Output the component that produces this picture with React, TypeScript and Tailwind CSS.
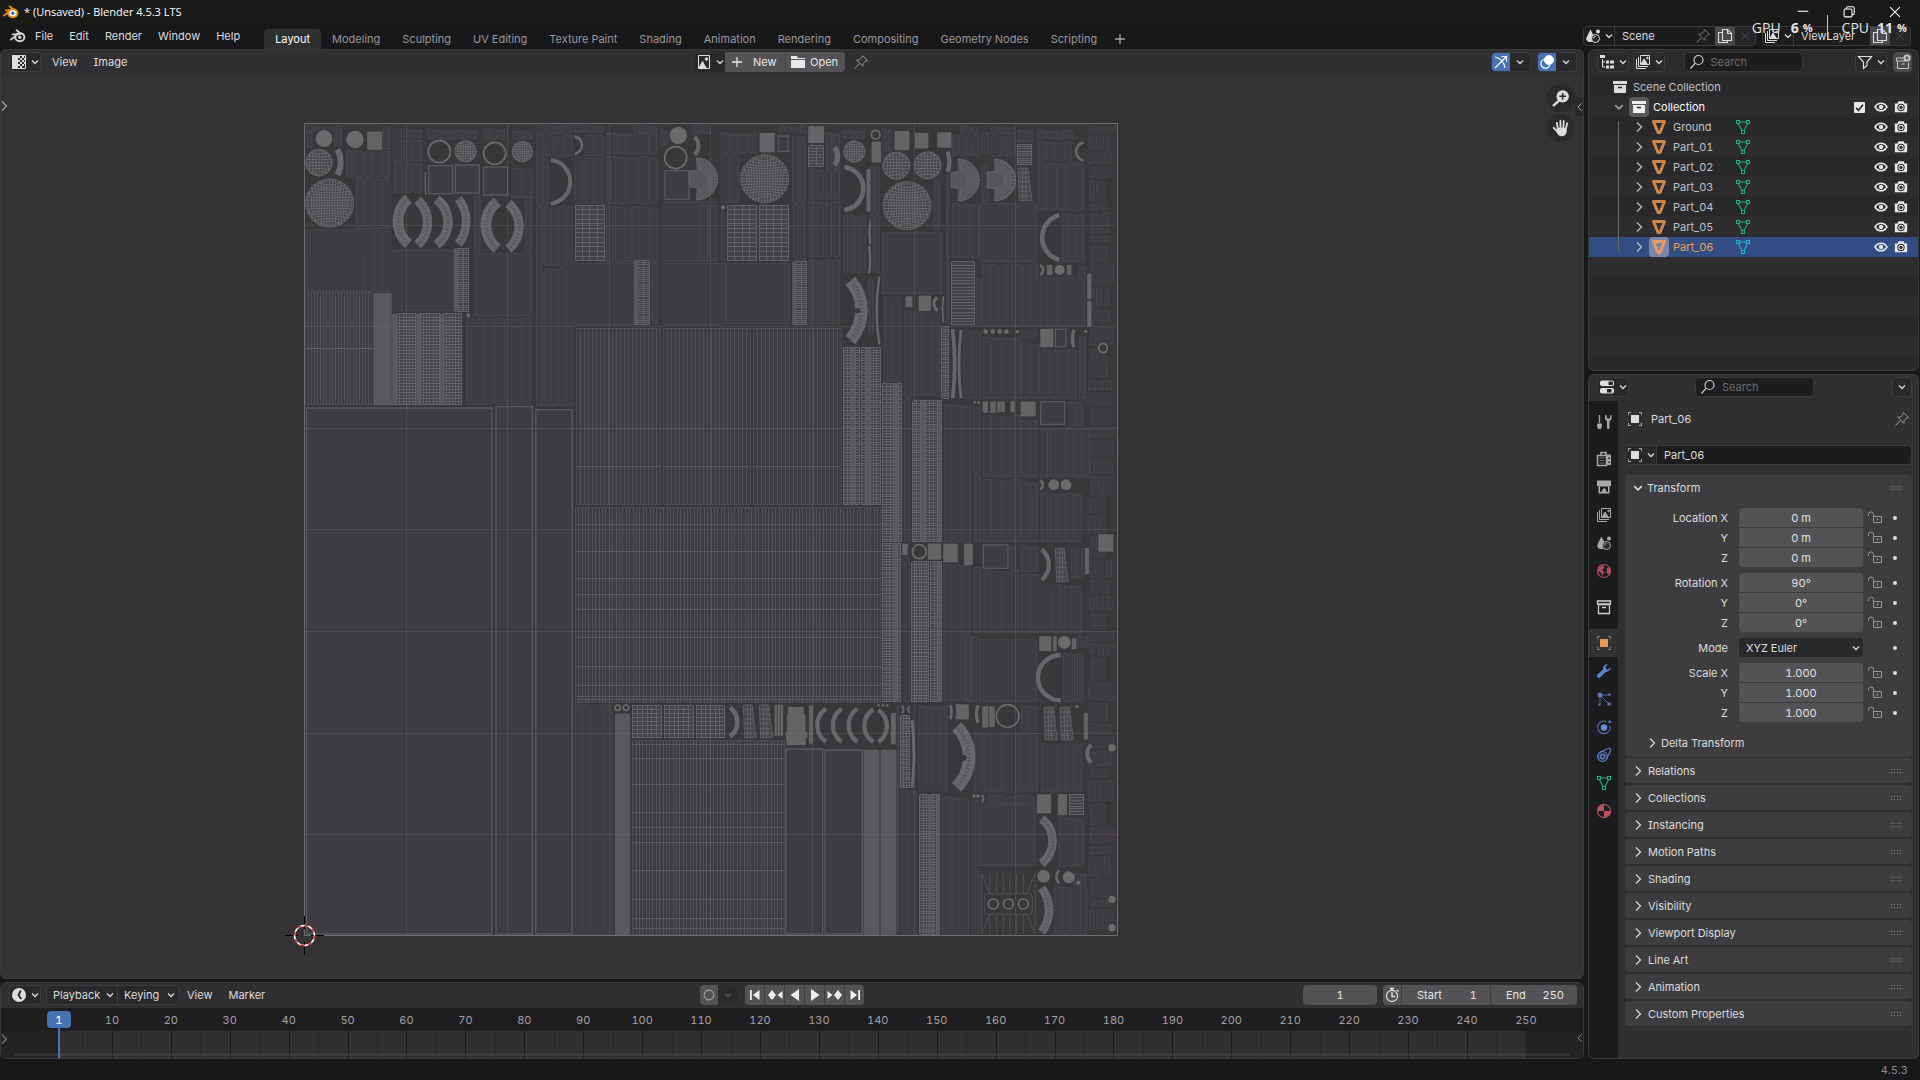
import React, { useState } from "react";
import clsx from "clsx";

type IconProps = { className?: string };

/* ---------- icons ---------- */

const Svg = ({ className = "size-4", children }: IconProps & { children: React.ReactNode }) => (
  <svg viewBox="0 0 16 16" fill="none" stroke="currentColor" strokeWidth="1" className={clsx("shrink-0", className)} aria-hidden="true">
    {children}
  </svg>
);

const ChevronDown = ({ className = "size-2" }: IconProps) => (
  <svg viewBox="0 0 8 8" fill="none" stroke="currentColor" strokeWidth="1.3" className={clsx("shrink-0", className)} aria-hidden="true">
    <path d="M1 2.5 4 5.5 7 2.5" />
  </svg>
);

const ChevronRight = ({ className = "size-3" }: IconProps) => (
  <svg viewBox="0 0 12 12" fill="none" stroke="currentColor" strokeWidth="1.2" className={clsx("shrink-0", className)} aria-hidden="true">
    <path d="M4 1.5 8.5 6 4 10.5" />
  </svg>
);

const BlenderLogo = ({ className, center = "none" }: IconProps & { center?: string }) => (
  <svg viewBox="0 0 16 16" fill="none" stroke="currentColor" className={clsx("shrink-0", className)} aria-hidden="true">
    <path d="M1 11.5 8.6 5.6M2.6 6.3h7M6.6 2.2 11 5.6" strokeWidth="1.8" strokeLinecap="round" />
    <ellipse cx="9.8" cy="9.2" rx="4.6" ry="4" strokeWidth="2" fill={center === "none" ? "none" : "#ffffff"} />
    <circle cx="9.8" cy="9.2" r="1.7" fill={center === "none" ? "currentColor" : center} stroke="none" />
  </svg>
);

const UvIcon = () => (
  <Svg>
    <path d="M1 1h5v14H1z" fill="currentColor" stroke="none" />
    <path d="M6.5 1.5h8v13h-8z" />
    <path d="M7 2h2v2H7zM11 2h2v2h-2zM9 4h2v2H9zM13 4h1v2h-1zM7 6h2v2H7zM11 6h2v2h-2zM9 8h2v2H9zM13 8h1v2h-1zM7 10h2v2H7zM11 10h2v2h-2zM9 12h2v2H9z" fill="currentColor" stroke="none" />
  </Svg>
);

const ImageIcon = () => (
  <Svg>
    <path d="M2.5 1.5h11v13h-11z" />
    <path d="M3 14 6.5 7.5 10 14z" fill="currentColor" />
    <circle cx="10.5" cy="5" r="1.3" fill="currentColor" />
  </Svg>
);

const FolderIcon = () => (
  <Svg>
    <path d="M1 2h6l1 2h7v1H1zM1 6h14v8H1z" fill="currentColor" stroke="none" />
  </Svg>
);

const PinIcon = ({ className }: IconProps) => (
  <Svg className={className}>
    <path d="M9.5 1.5 14.5 6.5 12.5 7.2 10 9.7 9.8 12.3 3.7 6.2 6.3 6 8.8 3.5zM6.5 9.5 1.5 14.5" />
  </Svg>
);

const PlusIcon = () => (
  <Svg>
    <path d="M8 3v10M3 8h10" strokeWidth="1.3" />
  </Svg>
);

const GizmoIcon = () => (
  <Svg>
    <path d="M2 3c5 1 9 5 10 11M2 14 13 3M8.5 2.5H13.5V7.5" strokeWidth="1.2" />
  </Svg>
);

const OverlayIcon = () => (
  <Svg>
    <circle cx="10" cy="6" r="4.5" fill="currentColor" />
    <path d="M5 5.2a4.6 4.6 0 1 0 5.8 6" strokeWidth="1.2" />
  </Svg>
);

const SceneIcon = ({ className }: IconProps) => (
  <Svg className={className}>
    <path d="M5.5 1.5 9 8.5a3.9 3.9 0 0 1-3 5.5H4A3.3 3.3 0 0 1 1.5 9.5z" fill="currentColor" stroke="none" />
    <circle cx="10.5" cy="10.5" r="4" fill="#29282b" />
    <circle cx="13" cy="3.5" r="2" fill="currentColor" stroke="none" />
    <path d="M8.5 10.5a2 2 0 0 1 2-2" />
  </Svg>
);

const CopyIcon = () => (
  <Svg>
    <path d="M5.5 1.5h5l4 4v7h-9zM10.5 1.5v4h4M5 4.5H1.5v10h9V13" strokeWidth="1.1" />
  </Svg>
);

const ViewLayerIcon = ({ className }: IconProps) => (
  <Svg className={className}>
    <path d="M1.5 5v9.5H11M3.5 3v9.5H13M5.5 1.5h9v9h-9z" />
    <path d="M6 10.5 9 5l3.5 5.5z" fill="currentColor" />
    <circle cx="12.5" cy="4" r=".8" fill="currentColor" />
  </Svg>
);

const TreeIcon = () => (
  <Svg>
    <path d="M1 1h5v3H1zM7 6.5h3v3H7zM7 11.5h3v3H7zM11 6.5h4v3h-4zM11 11.5h4v3h-4z" fill="currentColor" stroke="none" />
    <path d="M3.5 5v8H6M3.5 8H6" />
  </Svg>
);

const SearchIcon = () => (
  <Svg>
    <circle cx="9.5" cy="6" r="4.5" strokeWidth="1.2" />
    <path d="M6.3 9.2 1.5 14.5" strokeWidth="1.2" />
  </Svg>
);

const FilterIcon = () => (
  <Svg>
    <path d="M1.5 2.5h13L10 8v3.5L6.5 14.5V8z" strokeWidth="1.2" />
  </Svg>
);

const NewCollectionIcon = () => (
  <Svg>
    <path d="M8 4H1.5v3H11M2.5 7v7.5h11V8.5M6.5 10h3" />
    <circle cx="12" cy="4" r="3.6" fill="currentColor" stroke="none" />
    <path d="M12 2v4M10 4h4" stroke="#4a494c" />
  </Svg>
);

const ArchiveIcon = ({ className }: IconProps) => (
  <Svg className={className}>
    <path d="M1 2h14v3H1zM2 6h12v8H2z" fill="currentColor" stroke="none" />
    <path d="M6 8.5h4" stroke="#2a2a2c" strokeWidth="1.5" />
  </Svg>
);

const ObjectMesh = ({ className }: IconProps) => (
  <Svg className={className}>
    <path d="M2.5 2.5h11L9 13.5H7z" strokeWidth="3" strokeLinejoin="round" />
  </Svg>
);

const MeshData = ({ className }: IconProps) => (
  <Svg className={className}>
    <path d="M4 3h8M3.5 5 7 11.5M12.5 5 9 11.5M1.5 1.5H4.5v3H1.5zM11.5 1.5h3v3h-3zM6.5 11.5h3v3h-3z" strokeWidth="1.1" />
  </Svg>
);

const EyeIcon = () => (
  <Svg className="size-[14px]">
    <path d="M1.2 8C4.5 2.2 11.5 2.2 14.8 8 11.5 13.8 4.5 13.8 1.2 8z" strokeWidth="1.8" />
    <circle cx="8" cy="8" r="2.5" fill="currentColor" stroke="none" />
  </Svg>
);

const CameraIcon = () => (
  <Svg className="size-[14px]">
    <path d="M1 4h3l1-2.5h6L12 4h3v10H1z" fill="currentColor" stroke="none" />
    <circle cx="8" cy="8.5" r="3.6" stroke="#29292b" strokeWidth="1.2" />
    <circle cx="8" cy="8.5" r="1.8" fill="#29292b" stroke="none" />
  </Svg>
);

const PropsIcon = () => (
  <Svg>
    <rect x="1" y="1.5" width="14" height="5.5" rx="2" fill="currentColor" stroke="none" />
    <rect x="1" y="9" width="14" height="5.5" rx="2" fill="currentColor" stroke="none" />
    <path d="M9.5 2.5H13a1 1 0 0 1 1 1v1.5a1 1 0 0 1-1 1H9.5zM8 10h4.5v3.5H8z" fill="#232225" stroke="none" />
  </Svg>
);

const ObjectIcon = ({ className, fill = "currentColor" }: IconProps & { fill?: string }) => (
  <Svg className={className}>
    <path d="M4 1.5H1.5V4M12 1.5h2.5V4M4 14.5H1.5V12M12 14.5h2.5V12" strokeOpacity=".7" />
    <path d="M4 4h8v8H4z" fill={fill} stroke="none" />
  </Svg>
);

const ClockIcon = () => (
  <Svg>
    <circle cx="8" cy="8" r="7" fill="currentColor" stroke="none" />
    <path d="M9.8 3.5 7.5 8l2.8 4" stroke="#222124" strokeWidth="1.8" />
  </Svg>
);

const TimerIcon = () => (
  <Svg>
    <circle cx="8" cy="9" r="5.6" strokeWidth="1.1" />
    <path d="M8 5v4.5h3M6 1.5h4M8 1.5v2M13 3l1.5 1.5" strokeWidth="1.3" />
  </Svg>
);

const LockIcon = () => (
  <Svg>
    <path d="M6.5 6.5h8v6h-8zM6.5 6.5V4.5a2.5 2.5 0 0 0-5 0V6" />
    <path d="M10.5 8.5v2" strokeWidth="1.4" />
  </Svg>
);

/* ---------- property tab icons ---------- */

const ToolIcon = () => (
  <Svg>
    <path d="M3.5 1v8" strokeWidth="1.3" />
    <path d="M1.5 9.5h4l.5 2-1 3.5H2l-1-3.5z" fill="currentColor" stroke="none" />
    <path d="M9 1v4l2 2.2V14a1.3 1.3 0 0 0 2.5 0V7.2L15.5 5V1l-1.500.5V4l-1.500.8L10.800 4V1.500z" fill="currentColor" stroke="none" />
  </Svg>
);

const RenderIcon = () => (
  <Svg>
    <path d="M5 4V1.5h5V4M1.5 4.5h9v10h-9z" strokeWidth="1.5" />
    <path d="M3.5 7h5M3.5 9.5h5M3.5 12h5" strokeOpacity=".6" />
    <path d="M11 3.5h4V14h-4z" fill="currentColor" stroke="none" />
    <path d="M12.3 6.5h1.5v1.5h-1.5zM12.3 10.5h1.5V12h-1.5z" fill="#1c1c1e" stroke="none" />
  </Svg>
);

const OutputIcon = () => (
  <Svg>
    <path d="M1 1.5h14V7h-1.5v7.500h-11V7H1z" fill="currentColor" stroke="none" />
    <path d="M4 7.5V13h8V7.5z" fill="#1c1c1e" stroke="none" />
    <path d="M5 13 8.5 8.5 11 13z" fill="currentColor" stroke="none" />
  </Svg>
);

const WorldIcon = () => (
  <Svg>
    <circle cx="8" cy="8" r="6.5" strokeWidth="1.2" />
    <path d="M3 4.5 7 2l1.5 3L6 6.5 8 9 6.5 13 5 9.5 2 8zM11 5l3-.5.5 4-2 3-2-2z" fill="currentColor" stroke="none" />
  </Svg>
);

const CollectionIcon = () => (
  <Svg>
    <path d="M1.5 2h13v3h-13zM2.5 5.5h11v9h-11zM6 8.5h4" strokeWidth="1.3" />
  </Svg>
);

const WrenchIcon = () => (
  <Svg>
    <path d="M14.5 4.5 12 6.5 10 6 9.5 4 11.8 1.2A4.5 4.5 0 0 0 7 6.5L1.5 11.5a1.9 1.9 0 0 0 2.8 2.8L9.5 9A4.5 4.5 0 0 0 14.5 4.5z" fill="currentColor" stroke="none" />
  </Svg>
);

const ParticlesIcon = () => (
  <Svg>
    <circle cx="4" cy="4" r="2.5" fill="currentColor" stroke="none" />
    <path d="M6 4h7M4 6v7M6 6l6.5 6.5" strokeOpacity=".8" />
    <circle cx="13.5" cy="3.5" r="1.2" fill="currentColor" stroke="none" />
    <circle cx="3.5" cy="13.5" r="1.2" fill="currentColor" stroke="none" />
    <path d="M11.5 11.5h3v3h-3z" fill="currentColor" stroke="none" />
  </Svg>
);

const PhysicsIcon = () => (
  <Svg>
    <circle cx="8" cy="8.5" r="3.2" fill="#5d8fe0" stroke="none" />
    <path d="M10.5 2.5A6.3 6.3 0 1 0 14.2 7" strokeWidth="1.1" />
    <circle cx="13.8" cy="2.8" r="1.5" fill="currentColor" stroke="none" />
  </Svg>
);

const ConstraintIcon = () => (
  <Svg>
    <circle cx="6.5" cy="9.5" r="4.8" strokeWidth="1.3" />
    <circle cx="6.5" cy="9.5" r="2.2" strokeWidth="1.8" />
    <path d="M3.5 5.5 12 1.5a1.8 1.8 0 0 1 2.5 2.3L10.5 12" strokeWidth="1.2" />
  </Svg>
);

const MaterialIcon = () => (
  <Svg>
    <circle cx="8" cy="8" r="6.6" strokeWidth="1.2" />
    <path d="M8 8V1.5A6.5 6.5 0 0 0 1.5 8zM8 8v6.5A6.5 6.5 0 0 0 14.5 8z" fill="currentColor" stroke="none" />
  </Svg>
);

/* ---------- UV map ---------- */
// Coordinates are in thirds of a canvas pixel, relative to the sheet quadrant.

type Box = [x: number, y: number, w: number, h: number];
type Strip = [x: number, y: number, w: number, h: number, n: number];
type Grid = [x: number, y: number, w: number, h: number, nx: number, ny: number];
type Disc = [cx: number, cy: number, r: number];
// chord x, top, bottom, radius, thickness, bulge (1 right, 0 left)
type Arc = [x: number, y1: number, y2: number, r: number, w: number, side: 0 | 1];

type Sheet = {
  boxes?: Box[];
  frames?: Box[];
  solids?: Box[];
  pillars?: Box[];
  strips?: Strip[];
  grids?: Grid[];
  dense?: Grid[];
  discs?: Disc[];
  rings?: Disc[];
  spheres?: Disc[];
  fans?: Disc[];
  arcs?: Arc[];
  wedges?: Box[];
};

const gridPath = ([x, y, w, h, nx, ny]: Grid) => {
  let d = "";
  for (let i = 1; i < nx; i++) d += `M${x + (w * i) / nx} ${y}v${h}`;
  for (let i = 1; i < ny; i++) d += `M${x} ${y + (h * i) / ny}h${w}`;
  return d;
};

const stripPath = ([x, y, w, h, n]: Strip) => {
  let d = "";
  const step = w / n;
  for (let i = 0; i < n; i++) {
    const top = y + ((i * 7) % 3) * 2;
    d += `M${x + i * step + 2} ${top}h${step - 6}V${y + h}h${6 - step}z`;
  }
  return d;
};

const spherePath = ([cx, cy, r]: Disc) => {
  let d = "";
  const n = r > 50 ? 8 : 4;
  for (let i = -n + 1; i < n; i++) {
    const t = (i / n) * r;
    const half = Math.sqrt(r * r - t * t);
    d += `M${cx + t} ${cy - half}Q${cx + t * 0.7} ${cy} ${cx + t} ${cy + half}`;
    d += `M${cx - half} ${cy + t}Q${cx} ${cy + t * 0.7} ${cx + half} ${cy + t}`;
  }
  return d;
};

const fanPath = ([cx, cy, r]: Disc) => {
  let d = "";
  for (let i = 0; i <= 18; i++) {
    const a = -Math.PI / 2 + (Math.PI * i) / 18;
    d += `M${cx + Math.cos(a) * r * 0.45} ${cy + Math.sin(a) * r * 0.45}L${cx + Math.cos(a) * r} ${cy + Math.sin(a) * r}`;
  }
  return d;
};

const NW: Sheet = {
  boxes: [[48, 360, 172, 183], [310, 420, 182, 182], [555, 432, 170, 185], [853, 460, 180, 184], [1122, 460, 185, 184], [1122, 275, 155, 178]],
  frames: [[50, 894, 555, 1578], [618, 890, 109, 1582], [737, 899, 110, 1573], [416, 167, 72, 84], [496, 165, 72, 84], [581, 171, 72, 84], [1125, 182, 72, 86]],
  solids: [[233, 66, 42, 52]],
  pillars: [[251, 551, 53, 333], [308, 612, 12, 272], [380, 612, 11, 272], [450, 612, 12, 272], [493, 416, 10, 188], [1033, 452, 10, 192]],
  strips: [
    [48, 48, 110, 18, 4], [50, 66, 20, 45, 1], [132, 70, 26, 38, 1], [278, 50, 26, 66, 1],
    [168, 122, 135, 77, 5], [198, 203, 107, 153, 4], [225, 360, 80, 185, 3], [308, 57, 90, 25, 3], [308, 88, 92, 64, 3], [310, 157, 90, 90, 3],
    [412, 60, 150, 26, 6], [580, 56, 68, 32, 3], [665, 64, 64, 22, 2], [664, 175, 66, 88, 2], [704, 260, 24, 165, 1], [552, 258, 22, 170, 1],
    [528, 625, 198, 258, 7], [738, 290, 112, 178, 5], [738, 474, 112, 413, 5], [740, 46, 110, 24, 4], [738, 76, 112, 62, 4], [738, 142, 40, 144, 2],
    [853, 46, 90, 20, 3], [885, 75, 60, 62, 2], [853, 142, 90, 140, 3], [948, 70, 156, 62, 5], [948, 140, 158, 140, 5], [948, 290, 158, 164, 6],
    [1030, 46, 74, 22, 3], [1085, 460, 22, 180, 1], [1110, 62, 26, 42, 1], [1205, 46, 60, 24, 2],
  ],
  grids: [[48, 549, 197, 334, 22, 2], [860, 655, 252, 528, 21, 1], [1122, 655, 260, 528, 22, 1], [1390, 655, 264, 528, 22, 1], [856, 1192, 917, 585, 90, 1]],
  dense: [[320, 612, 58, 272, 6, 30], [391, 612, 58, 272, 6, 30], [462, 612, 54, 272, 6, 30], [503, 416, 34, 188, 2, 30], [1043, 452, 35, 192, 2, 30], [856, 286, 88, 166, 4, 12]],
  discs: [[102, 86, 25], [195, 88, 26], [1165, 76, 26], [535, 616, 6]],
  rings: [[448, 125, 33], [614, 130, 33], [1157, 143, 33]],
  spheres: [[87, 158, 40], [119, 279, 72], [697, 125, 31], [527, 124, 32]],
  arcs: [
    [355, 266, 402, 90, 32, 0], [383, 270, 404, 90, 28, 1], [440, 268, 404, 85, 28, 1], [505, 266, 402, 110, 26, 1],
    [622, 275, 416, 90, 32, 0], [655, 280, 418, 90, 28, 1], [783, 150, 281, 66, 12, 1], [854, 79, 132, 27, 8, 1], [142, 118, 195, 80, 18, 1],
    [1214, 80, 134, 38, 12, 1], [407, 186, 254, 300, 4, 0],
  ],
};

const NE: Sheet = {
  boxes: [[548, 368, 178, 182], [840, 280, 168, 174], [80, 460, 187, 182]],
  frames: [[235, 78, 30, 46], [1066, 658, 32, 52], [1022, 875, 72, 68]],
  solids: [
    [180, 70, 43, 56], [326, 50, 45, 48], [516, 96, 26, 60], [585, 64, 42, 55], [646, 70, 38, 44], [713, 68, 40, 44], [657, 558, 35, 44], [618, 560, 18, 30],
    [1022, 658, 37, 52], [963, 876, 43, 42], [1042, 466, 14, 28], [1102, 466, 11, 28], [849, 875, 14, 32], [872, 875, 14, 32], [893, 875, 8, 30],
    [905, 875, 8, 30], [933, 875, 10, 30], [1163, 492, 10, 74], [1163, 575, 10, 74], [501, 178, 9, 126],
  ],
  pillars: [[278, 456, 10, 188], [452, 713, 10, 472], [500, 713, 12, 472], [580, 822, 12, 473], [663, 872, 12, 423], [712, 872, 8, 423]],
  strips: [
    [62, 132, 58, 145, 2], [62, 70, 110, 58, 4], [0, 286, 54, 166, 2], [62, 300, 14, 150, 1], [235, 48, 85, 18, 4], [275, 80, 44, 200, 2], [278, 285, 40, 165, 2],
    [325, 178, 98, 90, 4], [325, 275, 98, 165, 4], [325, 448, 98, 196, 7], [378, 70, 44, 105, 2], [430, 62, 66, 22, 2], [430, 315, 70, 172, 4], [508, 170, 34, 140, 2],
    [508, 315, 34, 172, 2], [505, 505, 20, 160, 2], [550, 58, 28, 66, 2], [700, 210, 22, 150, 1], [738, 190, 12, 450, 1], [755, 280, 85, 162, 3], [755, 75, 86, 62, 4], [780, 48, 55, 22, 3],
    [844, 70, 26, 60, 1], [844, 165, 24, 108, 1], [873, 50, 74, 22, 3], [873, 78, 74, 60, 4], [953, 62, 48, 34, 2],
    [845, 462, 172, 186, 7], [828, 506, 18, 142, 1], [1012, 62, 112, 24, 4], [1012, 95, 105, 55, 4], [1012, 158, 142, 142, 5], [1085, 312, 70, 142, 3],
    [1018, 502, 112, 148, 4], [1132, 470, 26, 178, 1], [552, 560, 52, 255, 2], [612, 606, 110, 250, 4], [790, 665, 56, 200, 2], [848, 682, 118, 183, 4],
    [962, 664, 52, 20, 2], [962, 702, 60, 163, 2], [1022, 718, 110, 147, 4], [1136, 680, 24, 184, 1],
    [732, 885, 84, 410, 3], [818, 892, 26, 198, 1], [848, 916, 118, 184, 4], [964, 930, 50, 170, 2], [1022, 955, 150, 146, 6], [1105, 875, 46, 72, 2],
    [820, 1095, 26, 200, 1], [848, 1108, 118, 187, 4], [964, 1118, 52, 177, 2], [1022, 1150, 126, 145, 5], [612, 862, 22, 430, 1],
  ],
  dense: [
    [83, 286, 88, 166, 4, 12], [178, 286, 88, 166, 4, 12], [288, 456, 33, 188, 2, 30], [326, 108, 45, 62, 2, 7], [954, 103, 42, 62, 1, 9], [755, 456, 68, 188, 1, 20],
    [430, 713, 50, 472, 4, 60], [485, 713, 57, 472, 5, 60], [547, 822, 59, 473, 5, 60], [638, 872, 87, 423, 7, 54], [725, 650, 22, 215, 2, 28],
  ],
  discs: [[1079, 480, 15], [1061, 1124, 16], [1098, 1124, 16], [857, 665, 7], [878, 665, 7], [899, 665, 7], [919, 665, 7], [952, 665, 5], [69, 292, 6], [1157, 664, 5], [824, 877, 4], [836, 877, 4]],
  rings: [[527, 74, 13], [1209, 714, 13]],
  spheres: [[194, 206, 72], [621, 287, 72], [589, 167, 41], [683, 166, 41], [463, 125, 32]],
  fans: [[-10, 207, 63], [775, 210, 63], [884, 210, 63]],
  arcs: [
    [404, 112, 166, 45, 16, 1], [433, 171, 300, 65, 14, 1], [743, 125, 185, 90, 13, 1], [1078, 315, 450, 70, 14, 0], [1151, 97, 152, 28, 8, 0],
    [451, 512, 690, 135, 38, 1], [538, 500, 703, 650, 7, 0], [758, 658, 865, 900, 11, 1], [783, 660, 865, 900, 8, 0], [1020, 466, 494, 15, 8, 1],
    [712, 562, 602, 25, 9, 0], [730, 558, 638, 300, 5, 0], [1122, 660, 712, 80, 10, 0], [1020, 1111, 1138, 15, 8, 1], [510, 332, 402, 300, 6, 0], [507, 408, 490, 300, 6, 1],
  ],
  wedges: [[954, 174, 42, 98]],
};

const SE: Sheet = {
  boxes: [[838, 360, 172, 184], [843, 855, 162, 182]],
  frames: [[258, 687, 110, 555], [375, 690, 112, 552], [850, 75, 74, 70]],
  solids: [
    [1196, 44, 43, 50], [685, 72, 37, 46], [731, 72, 41, 54], [793, 72, 24, 62], [1156, 85, 10, 76], [608, 72, 14, 32], [1019, 350, 34, 42], [1061, 350, 8, 42], [1117, 356, 11, 30],
    [265, 562, 45, 20], [262, 584, 53, 50], [258, 636, 63, 16], [260, 654, 56, 20], [328, 558, 10, 112], [769, 554, 36, 43], [848, 560, 16, 62], [869, 560, 14, 60],
    [1153, 580, 9, 78], [1012, 824, 40, 55], [1075, 824, 25, 60], [225, 555, 5, 92], [234, 555, 5, 92], [243, 555, 5, 92], [574, 580, 12, 92],
  ],
  pillars: [[492, 690, 45, 553], [543, 690, 45, 553], [580, 70, 12, 475], [712, 125, 8, 420], [686, 825, 8, 418], [710, 825, 8, 418]],
  strips: [
    [610, 110, 22, 434, 1], [730, 133, 85, 408, 3], [820, 142, 26, 196, 1], [850, 152, 110, 186, 4], [962, 80, 55, 74, 2], [962, 162, 58, 176, 2], [1022, 192, 66, 146, 2], [1090, 198, 60, 140, 2],
    [1112, 84, 40, 90, 2], [930, 75, 20, 72, 2], [795, 348, 38, 196, 2], [1088, 400, 66, 144, 4], [1132, 350, 36, 30, 2], [655, 558, 90, 255, 4], [822, 640, 195, 175, 7], [962, 558, 52, 75, 2],
    [1022, 672, 128, 143, 5], [863, 826, 142, 24, 5], [725, 832, 85, 410, 3], [815, 842, 26, 195, 1], [815, 1046, 26, 196, 1], [1076, 894, 78, 144, 3], [603, 812, 50, 430, 2], [1062, 1100, 102, 142, 4],
    [1120, 1060, 40, 34, 2], [590, 556, 10, 680, 1],
  ],
  dense: [
    [547, 70, 56, 475, 5, 60], [635, 125, 52, 420, 7, 46], [692, 125, 33, 420, 3, 54], [603, 588, 25, 215, 3, 28], [660, 825, 28, 418, 3, 54], [692, 825, 28, 418, 3, 54],
    [1108, 824, 44, 60, 1, 7], [-10, 556, 84, 98, 6, 8],
  ],
  discs: [[1093, 367, 19], [1236, 683, 11], [1236, 1138, 11], [1236, 1223, 11], [1031, 1069, 19], [1106, 1072, 18], [1135, 1088, 6], [1131, 559, 5], [822, 828, 5], [834, 828, 5], [536, 556, 4], [549, 556, 4], [562, 556, 4]],
  rings: [[658, 95, 21], [923, 588, 34], [880, 1152, 15], [925, 1152, 15], [970, 1152, 15]],
  arcs: [
    [1025, 88, 180, 60, 13, 1], [1082, 405, 541, 68, 13, 0], [90, 562, 650, 55, 14, 1], [378, 566, 665, 60, 13, 0], [425, 566, 665, 60, 13, 0], [472, 566, 665, 60, 13, 0],
    [520, 568, 666, 58, 13, 0], [535, 570, 666, 58, 13, 1], [770, 620, 802, 130, 38, 1], [752, 555, 598, 90, 8, 1], [834, 556, 608, 80, 10, 0], [1174, 674, 728, 36, 12, 0],
    [1025, 896, 1030, 85, 26, 1], [1078, 1050, 1090, 28, 8, 0], [1025, 1104, 1236, 110, 26, 1], [636, 600, 803, 900, 9, 1], [606, 556, 580, 18, 6, 1], [628, 558, 578, 18, 6, 0], [846, 824, 848, 22, 6, 1],
  ],
  wedges: [[1066, 85, 38, 100], [130, 555, 38, 98], [178, 555, 40, 98], [1032, 562, 40, 98], [1080, 562, 40, 98]],
};

const SW: Sheet = {
  pillars: [[976, 582, 43, 663]],
  strips: [[853, 553, 116, 690, 5]],
  grids: [[1028, 662, 456, 582, 45, 1]],
  dense: [[1028, 556, 87, 98, 6, 8], [1123, 556, 88, 98, 6, 8]],
  rings: [[983, 563, 8], [1008, 563, 8]],
};

const boxPath = ([x, y, w, h]: Box) => `M${x} ${y}h${w}v${h}h${-w}z`;

// Small leftovers packed along the right edge of the sheet.
const scraps = (() => {
  let seed = 11;
  const rnd = () => (seed = (seed * 16807) % 2147483647) / 2147483647;
  const out: Box[] = [];
  for (let y = 48; y < 2400; ) {
    const h = 22 + Math.round(rnd() * 44);
    let x = 1164 + Math.round(rnd() * 12);
    while (x < 1236) {
      const w = 12 + Math.round(rnd() * 14);
      if (x + w < 1246) out.push([x, y + Math.round(rnd() * 5), w, h - 6]);
      x += w + 7;
    }
    y += h + 6;
  }
  return out;
})();

const Quadrant = ({ x, y, sheet }: { x: number; y: number; sheet: Sheet }) => (
  <g transform={`translate(${x} ${y}) scale(.33333)`} fill="none" strokeWidth="2">
    <path d={(sheet.boxes ?? []).map(boxPath).join("")} fill="#3e3c40" stroke="#4f4d51" />
    <path d={(sheet.strips ?? []).map(stripPath).join("")} fill="#3e3c40" stroke="#4f4d51" />
    {sheet.grids?.map((g, i) => (
      <g key={i} shapeRendering="crispEdges">
        <path d={boxPath([g[0], g[1], g[2], g[3]])} fill="#3e3c40" stroke="#545256" />
        <path d={gridPath(g)} stroke="#535155" strokeWidth="3" />
      </g>
    ))}
    {sheet.dense?.map((g, i) => (
      <g key={i} shapeRendering="crispEdges" strokeWidth="3">
        <path d={boxPath([g[0], g[1], g[2], g[3]])} fill="#444246" stroke="#646266" />
        <path d={gridPath(g)} stroke="#626064" />
      </g>
    ))}
    <path d={(sheet.pillars ?? []).map(boxPath).join("")} fill="#5a585c" stroke="#626064" />
    <path d={(sheet.frames ?? []).map(boxPath).join("")} fill="#3e3c40" stroke="#5a585c" strokeWidth="4" />
    <path d={(sheet.solids ?? []).map(boxPath).join("")} fill="#656366" stroke="#6d6b6e" />
    {sheet.wedges?.map(([wx, wy, w, h], i) => (
      <g key={i} stroke="#6d6b6e">
        <path d={`M${wx} ${wy}h${w * 0.7}l${w * 0.3} ${h}H${wx + 4}z`} fill="#48464a" />
        <path d={gridPath([wx + 4, wy, w * 0.7, h, 3, 7])} />
      </g>
    ))}
    {sheet.discs?.map(([cx, cy, r], i) => <circle key={i} cx={cx} cy={cy} r={r} fill="#6c6a6d" />)}
    {sheet.rings?.map(([cx, cy, r], i) => <circle key={i} cx={cx} cy={cy} r={r} fill="#39373a" stroke="#6d6b6e" strokeWidth="5" />)}
    {sheet.spheres?.map((s, i) => (
      <g key={i} stroke="#737174">
        <circle cx={s[0]} cy={s[1]} r={s[2]} fill="#454347" />
        <circle cx={s[0]} cy={s[1]} r={s[2] * 0.92} strokeOpacity=".6" />
        <path d={spherePath(s)} strokeWidth="2" />
      </g>
    ))}
    {sheet.fans?.map((f, i) => (
      <g key={i} stroke="#737174">
        <path d={`M${f[0]} ${f[1] - f[2]}a${f[2]} ${f[2]} 0 0 1 0 ${f[2] * 2}l6 -36l-28 -4v-46l28 -4z`} fill="#575559" />
        <path d={fanPath(f)} strokeOpacity=".8" />
      </g>
    ))}
    {sheet.arcs?.map(([ax, y1, y2, r, w, side], i) => (
      <g key={i}>
        <path d={`M${ax} ${y1}A${r} ${r} 0 0 ${side} ${ax} ${y2}`} stroke="#68666a" strokeWidth={w} />
        {w > 20 && <path d={`M${ax} ${y1}A${r} ${r} 0 0 ${side} ${ax} ${y2}`} stroke="#5a585c" strokeWidth={w / 3} strokeDasharray="6 5" />}
      </g>
    ))}
  </g>
);

const UvCanvas = () => {
  const ticks = [1, 2, 3, 4, 5, 6, 7];
  return (
    <svg viewBox="1 76 1582 902" className="absolute inset-0 size-full" role="img" aria-label="UV map">
      <rect x="304" y="123" width="814" height="813" fill="#39373a" />
      <g transform="translate(700 110) scale(.33333)">
        <path d={scraps.map(boxPath).join("")} fill="#3d3b3f" stroke="#4b494d" strokeWidth="2" />
      </g>
      <Quadrant x={290} y={520} sheet={SW} />
      <Quadrant x={290} y={110} sheet={NW} />
      <Quadrant x={700} y={110} sheet={NE} />
      <Quadrant x={700} y={520} sheet={SE} />
      <g transform="translate(700 110) scale(.33333)">
        <circle cx="473" cy="602" r="8" fill="#39373a" />
        <circle cx="790" cy="1943" r="9" fill="#39373a" />
        <path d="M865 2352h120a12 12 0 0 1 12 12v36a12 12 0 0 1 -12 12H865a12 12 0 0 1 -12 -12v-36a12 12 0 0 1 12 -12zM845 2290v183M1005 2290v183M845 2290l24 62M1005 2290l-24 62M845 2473l24 -61M1005 2473l-24 -61M870 2290v62M890 2290v62M910 2290v62M930 2290v62M950 2290v62M970 2290v62M870 2473v-61M890 2473v-61M910 2473v-61M930 2473v-61M950 2473v-61M970 2473v-61" fill="none" stroke="#5c5a5e" strokeWidth="2" />
      </g>
      {/* loop cuts across the ribbed sheets */}
      <path
        d="M577 466.5h84M664 466.5h86M753 466.5h87M577 524.5h304M577 551.5h304M577 578.5h304M577 594.5h304M577 609.5h304M577 637.5h304M577 666.5h304M577 685.5h304M577 696.5h304M577 699.5h304M633 744.5h151M633 758.5h151M633 784.5h151M633 812.5h151M633 827.5h151M633 842.5h151M633 870.5h151M633 899.5h151M633 918.5h151M633 928.5h151M306 348.5h66"
        stroke="#737174"
        strokeOpacity=".5"
      />
      <path d={ticks.map((t) => `M${304.5 + Math.round(t * 101.6)} 124V935M305 ${123.5 + Math.round(t * 101.6)}H1117`).join("")} stroke="#7a787b" strokeOpacity=".25" />
      <rect x="304.5" y="123.5" width="813" height="812" fill="none" stroke="#6f6d70" />
      <path d="M304.5 916v13M304.5 942v13M285 935.5h13M311 935.5h13" stroke="#000" />
      <circle cx="304.5" cy="935.5" r="10" fill="none" stroke="#fff" strokeWidth="1.5" />
      <circle cx="304.5" cy="935.5" r="10" fill="none" stroke="#d02c2c" strokeWidth="1.5" strokeDasharray="3.9 3.95" />
    </svg>
  );
};

/* ---------- shared controls ---------- */

const MenuButton = ({ label, children, className }: { label: string; children: React.ReactNode; className?: string }) => (
  <button
    type="button"
    aria-label={label}
    className={clsx("flex h-5 w-8 shrink-0 items-center justify-center gap-1 rounded border border-[#3c3b3e] bg-[#29282b] text-[#dedddf]", className)}
  >
    {children}
    <ChevronDown />
  </button>
);

const SearchBox = ({ label }: { label: string }) => (
  <label className="flex h-5 w-[119px] items-center gap-[6px] rounded border border-[#39383b] bg-[#1d1c1f] px-1 text-[#d0cfd1]">
    <SearchIcon />
    <input type="text" aria-label={label} placeholder="Search" className="w-full min-w-0 bg-transparent outline-none placeholder:text-[#6d6c6f]" />
  </label>
);

const editor = "overflow-hidden rounded-md border border-[#3a393c]";

/* ---------- top ---------- */

const workspaces = ["Layout", "Modeling", "Sculpting", "UV Editing", "Texture Paint", "Shading", "Animation", "Rendering", "Compositing", "Geometry Nodes", "Scripting"];

const TitleBar = () => (
  <div className="flex h-6 items-center bg-[#1a1b18] pr-[2px] pl-[3px] font-['Open_Sans',sans-serif] text-white">
    <BlenderLogo className="size-4 text-[#ea8a1c]" center="#2a6fa8" />
    <span className="flex-1 pl-[5px]">* (Unsaved) - Blender 4.5.3 LTS</span>
    <button type="button" aria-label="Minimize" className="flex h-6 w-[46px] items-center justify-center">
      <Svg className="size-3"><path d="M1 7h14" strokeWidth="1.4" /></Svg>
    </button>
    <button type="button" aria-label="Restore" className="flex h-6 w-[46px] items-center justify-center">
      <Svg className="size-3"><path d="M4.5 3.5V3a2 2 0 0 1 2-2H13a2 2 0 0 1 2 2v6.5a2 2 0 0 1-2 2h-.5M3 4h7.5a1.5 1.5 0 0 1 1.5 1.5V13a1.5 1.5 0 0 1-1.5 1.5H3A1.5 1.5 0 0 1 1.5 13V5.5A1.5 1.5 0 0 1 3 4z" strokeWidth="1.4" /></Svg>
    </button>
    <button type="button" aria-label="Close" className="flex h-6 w-[46px] items-center justify-center">
      <Svg className="size-3"><path d="M1.5 1.5 14.5 14.5M14.5 1.5 1.5 14.5" strokeWidth="1.4" /></Svg>
    </button>
  </div>
);

const DataBlock = ({ icon, name, pin, className }: { icon: React.ReactNode; name: string; pin?: boolean; className: string }) => (
  <div className="flex h-5 overflow-hidden rounded border border-[#3a393c] bg-[#1d1c1f] text-[#dddcde]">
    <button type="button" aria-label={`Browse ${name}`} className="flex w-[31px] items-center justify-center gap-1 border-r border-[#3a393c]">
      {icon}
      <ChevronDown />
    </button>
    <input aria-label={name} defaultValue={name} className={clsx("min-w-0 bg-transparent pl-[7px] outline-none", className)} />
    {pin && <PinIcon className="mr-1 size-4 self-center text-[#77767a]" />}
    <button type="button" aria-label={`New ${name}`} className="flex w-5 items-center justify-center bg-[#4a494c]">
      <CopyIcon />
    </button>
    <button type="button" aria-label={`Remove ${name}`} className="flex w-5 items-center justify-center bg-[#262528] text-[#444346]">
      <Svg className="size-3"><path d="M3 3 13 13M13 3 3 13" strokeWidth="1.3" /></Svg>
    </button>
  </div>
);

const TopBar = () => (
  <div className="flex h-[25px] items-start pr-[9px]">
    <BlenderLogo className="mt-1 ml-[10px] size-4 text-[#d2d1d3]" />
    <nav className="flex h-6 items-center gap-4 pl-[9px] text-[#dddcde]">
      {["File", "Edit", "Render", "Window", "Help"].map((m) => (
        <button key={m} type="button">{m}</button>
      ))}
    </nav>
    <nav className="mt-[5px] ml-6 flex flex-1">
      {workspaces.map((w, i) => (
        <button key={w} type="button" className={clsx("h-5 rounded-t px-[11px]", i === 0 ? "bg-[#303032] text-white" : "text-[#98979a]")}>
          {w}
        </button>
      ))}
      <button type="button" aria-label="Add workspace" className="px-1 text-[#a8a7aa]">
        <PlusIcon />
      </button>
    </nav>
    <div className="mt-[2px] flex gap-[6px]">
      <DataBlock icon={<SceneIcon className="size-4" />} name="Scene" pin className="w-20" />
      <DataBlock icon={<ViewLayerIcon className="size-4" />} name="ViewLayer" className="w-[76px]" />
    </div>
  </div>
);

const UsageOverlay = () => (
  <div className="pointer-events-none absolute top-[15px] right-[13px] flex h-[25px] items-center font-['Open_Sans',sans-serif] text-sm text-[#e4e4e4]">
    <span>GPU</span>
    <b className="pl-[10px]">6</b>
    <b className="pl-1 text-[11px]">%</b>
    <span className="mx-[14px] h-full w-px bg-[#c8c8c8]" />
    <span>CPU</span>
    <b className="pl-2">11</b>
    <b className="pl-1 text-[11px]">%</b>
  </div>
);

/* ---------- image editor ---------- */

const ImageEditor = () => (
  <section className={clsx(editor, "flex min-h-0 flex-1 flex-col bg-[#343235]")}>
    <header className="flex h-[26px] items-center bg-[#302f31] px-2 pr-[6px] pb-[2px] text-[#dddcde]">
      <div className="flex flex-1 items-center">
        <MenuButton label="Editor type"><UvIcon /></MenuButton>
        <button type="button" className="ml-[11px]">View</button>
        <button type="button" className="ml-4">Image</button>
      </div>
      <div className="flex items-center pr-[22px]">
        <button type="button" aria-label="Browse image" className="flex h-5 w-[30px] items-center justify-center gap-1 rounded-l bg-[#29282b]">
          <ImageIcon />
          <ChevronDown />
        </button>
        <button type="button" className="flex h-5 w-[60px] items-center gap-2 bg-[#535255] pl-1 text-[#e8e7e9]">
          <PlusIcon /> New
        </button>
        <button type="button" className="flex h-5 w-[60px] items-center gap-1 rounded-r border-l border-[#434245] bg-[#535255] pl-1 text-[#e8e7e9]">
          <FolderIcon /> Open
        </button>
        <PinIcon className="ml-2 size-4 text-[#98979a]" />
      </div>
      <div className="flex flex-1 justify-end gap-[6px]">
        {[<GizmoIcon key="g" />, <OverlayIcon key="o" />].map((icon, i) => (
          <div key={i} className="flex h-5 overflow-hidden rounded border border-[#3a393c] bg-[#29282b]">
            <button type="button" aria-label={i ? "Overlays" : "Gizmos"} className="flex w-[18px] items-center justify-center bg-[#4772b3] text-white">{icon}</button>
            <button type="button" aria-label={i ? "Overlay options" : "Gizmo options"} className="flex w-5 items-center justify-center"><ChevronDown /></button>
          </div>
        ))}
      </div>
    </header>
    <div className="relative min-h-0 flex-1">
      <UvCanvas />
      <button type="button" aria-label="Show toolbar" className="absolute top-6 left-0 text-[#a8a7aa]">
        <ChevronRight className="-ml-[3px] size-3" />
      </button>
      <button type="button" aria-label="Show sidebar" className="absolute top-[22px] right-0 rounded-l bg-[#2a292b] py-1 text-[#a8a7aa]">
        <ChevronRight className="-mr-[2px] size-[10px] rotate-180" />
      </button>
      <div className="absolute top-2 right-2 flex flex-col gap-[2px] text-[#dddcde]">
        <button type="button" aria-label="Zoom" className="flex size-7 items-center justify-center rounded-full bg-[#2a292b]">
          <Svg className="size-[18px]">
            <circle cx="9.5" cy="6.5" r="5.5" fill="currentColor" stroke="none" />
            <path d="M6 10.5 1.5 14.5" strokeWidth="2.2" strokeLinecap="round" />
            <path d="M9.5 3.5v6M6.5 6.5h6" stroke="#2a292b" strokeWidth="1.3" />
          </Svg>
        </button>
        <button type="button" aria-label="Pan" className="flex size-7 items-center justify-center rounded-full bg-[#2a292b]">
          <Svg className="size-[18px]">
            <path d="M5.2 8.5 4.3 3.5M7.5 8V1.5M10 8 10.5 1.8M12.3 8.5 13.5 3.8M4.5 11 1.5 7.8" strokeWidth="1.6" strokeLinecap="round" />
            <path d="M4.4 7.8h8.7v2.7c0 3-1.5 4.8-4.3 4.8-2.3 0-3.6-1-5-4.2z" fill="currentColor" stroke="none" />
          </Svg>
        </button>
      </div>
    </div>
  </section>
);

/* ---------- timeline ---------- */

const FIRST_LEFT = 3.66; // percent, position of frame 1
const FRAME_STEP = 0.3724; // percent per frame
const frameLeft = (f: number) => `${FIRST_LEFT + (f - 1) * FRAME_STEP}%`;

const majors = Array.from({ length: 25 }, (_, i) => (i + 1) * 10);
const minors = majors.map((f) => f - 5);

const transport: [string, React.ReactNode][] = [
  ["Jump to start", <path key="p" d="M3 3h1.8v10H3zM12.5 3v10L6 8z" />],
  ["Previous keyframe", <path key="p" d="M5 3 9 8 5 13 1 8zM15.5 4v8L10.5 8z" />],
  ["Play reversed", <path key="p" d="M12 2v12L3.5 8z" />],
  ["Play", <path key="p" d="M4 2v12l8.5-6z" />],
  ["Next keyframe", <path key="p" d="M11 3 15 8 11 13 7 8zM.5 4v8L5.5 8z" />],
  ["Jump to end", <path key="p" d="M11.2 3H13v10h-1.8zM3.5 3v10L10 8z" />],
];

const Timeline = () => {
  const [frame, setFrame] = useState("1");
  return (
    <section className={clsx(editor, "bg-[#232225]")}>
      <header className="flex h-[25px] items-center bg-[#302f32] px-2 pr-[6px] pb-[2px] text-[#dddcde]">
        <div className="flex flex-1 items-center">
          <MenuButton label="Editor type"><ClockIcon /></MenuButton>
          <div className="ml-[5px] flex h-5 rounded border border-[#3c3b3e] bg-[#29282b]">
            <button type="button" className="flex w-[71px] items-center justify-between border-r border-[#3c3b3e] px-[6px] pr-[3px]">Playback <ChevronDown /></button>
            <button type="button" className="flex w-[60px] items-center justify-between px-[6px] pr-[3px]">Keying <ChevronDown /></button>
          </div>
          <button type="button" className="ml-2">View</button>
          <button type="button" className="ml-4">Marker</button>
        </div>
        <div className="flex pr-[22px]">
          <button type="button" aria-label="Auto keying" className="flex h-5 w-[18px] items-center justify-center rounded-l bg-[#535255] text-[#a5a4a7]">
            <Svg className="size-3"><circle cx="8" cy="8" r="6.5" strokeWidth="1.4" /></Svg>
          </button>
          <button type="button" aria-label="Auto keying options" className="flex h-5 w-[19px] items-center justify-center rounded-r bg-[#2b2a2d] text-[#59585b]"><ChevronDown /></button>
          <div className="ml-2 flex h-5 gap-px overflow-hidden rounded bg-[#3d3c3f]">
            {transport.map(([name, shape]) => (
              <button key={name} type="button" aria-label={name} className="flex w-[19px] items-center justify-center bg-[#535255] text-[#eeedef]">
                <svg viewBox="0 0 16 16" fill="currentColor" className="size-4">{shape}</svg>
              </button>
            ))}
          </div>
        </div>
        <div className="flex flex-1 items-center justify-end text-[#e8e7e9]">
          <input aria-label="Current frame" value={frame} onChange={(e) => setFrame(e.target.value)} className="h-5 w-[74px] rounded bg-[#535255] text-center outline-none" />
          <div className="ml-[6px] flex h-5 gap-px overflow-hidden rounded bg-[#3d3c3f]">
            <button type="button" aria-label="Use preview range" className="flex w-[18px] items-center justify-center bg-[#535255]"><TimerIcon /></button>
            <label className="flex w-[88px] items-center justify-between bg-[#535255] pr-[13px] pl-[15px]">
              Start
              <input defaultValue="1" className="w-8 bg-transparent text-right outline-none" />
            </label>
            <label className="flex w-[86px] items-center justify-between bg-[#535255] pr-[13px] pl-[15px]">
              End
              <input defaultValue="250" className="w-8 bg-transparent text-right outline-none" />
            </label>
          </div>
        </div>
      </header>
      <div className="relative h-[50px] bg-[#1e1d20]">
        <div className="absolute inset-x-0 top-[23px] bottom-0 bg-[#232225]">
          <div className="absolute inset-y-0 bg-[#302f32]" style={{ left: frameLeft(1), width: `${249 * FRAME_STEP}%` }} />
          {minors.map((f) => <i key={f} className="absolute inset-y-0 w-px bg-[#29282b]" style={{ left: frameLeft(f) }} />)}
          {majors.map((f) => <i key={f} className="absolute inset-y-0 w-px bg-[#19181b]" style={{ left: frameLeft(f) }} />)}
          <div className="absolute inset-x-3 bottom-[2px] h-[3px] rounded-full bg-white/7" />
        </div>
        {majors.map((f) => (
          <span key={f} className="absolute top-1 -translate-x-1/2 leading-4 text-[#a3a2a5]" style={{ left: frameLeft(f) }}>{f}</span>
        ))}
        <div className="absolute top-[3px] bottom-0 w-6 -translate-x-1/2" style={{ left: frameLeft(1) }}>
          <div className="flex h-[17px] items-center justify-center rounded bg-[#4772b3] text-white">{frame}</div>
          <div className="mx-auto h-[30px] w-[2px] bg-[#4772b3]" />
        </div>
        <ChevronRight className="absolute top-[25px] -left-[3px] size-3 text-[#77767a]" />
        <ChevronRight className="absolute top-[25px] -right-[2px] size-[10px] rotate-180 text-[#88878a]" />
      </div>
    </section>
  );
};

/* ---------- outliner ---------- */

const objects = ["Ground", "Part_01", "Part_02", "Part_03", "Part_04", "Part_05", "Part_06"];

const Outliner = () => {
  const [selected, setSelected] = useState("Part_06");
  return (
    <section className={clsx(editor, "flex h-[322px] flex-col bg-[#29292b] text-[#c3c2c5]")}>
      <header className="flex h-[26px] shrink-0 items-center bg-[#2b2a2d] px-2 pr-[6px] pb-[2px]">
        <MenuButton label="Editor type"><TreeIcon /></MenuButton>
        <MenuButton label="Display mode" className="ml-1"><ViewLayerIcon /></MenuButton>
        <div className="flex flex-1 justify-center pr-[34px]">
          <SearchBox label="Filter outliner" />
        </div>
        <MenuButton label="Filter"><FilterIcon /></MenuButton>
        <button type="button" aria-label="New collection" className="ml-[6px] flex h-5 w-[19px] items-center justify-center rounded bg-[#4a494c] text-[#c9c8cb]">
          <NewCollectionIcon />
        </button>
      </header>
      <div className="relative min-h-0 flex-1 bg-[repeating-linear-gradient(#29282b_0_20px,#2d2c2f_20px_40px)] pt-px">
        <div className="flex h-5 items-center pl-[23px]">
          <ArchiveIcon className="size-4 text-[#dddcde]" />
          <span className="pl-[5px]">Scene Collection</span>
        </div>
        <div className="flex h-5 items-center pr-[10px] pl-[25px] text-white">
          <ChevronDown className="size-[10px] text-[#a3a2a5]" />
          <span className="ml-[5px] flex size-5 items-center justify-center rounded bg-[#59585b]">
            <ArchiveIcon className="size-4 text-[#f0eff1]" />
          </span>
          <span className="flex-1 pl-1">Collection</span>
          <label className="relative flex size-[11px] text-[#222]">
            <input type="checkbox" defaultChecked aria-label="Exclude from view layer" className="size-full appearance-none rounded-[1px] bg-[#e8e7e9]" />
            <Svg className="absolute inset-0 size-full"><path d="M3 8.5 6.5 12 13 4" strokeWidth="2.2" /></Svg>
          </label>
          <span className="flex gap-[6px] pl-[9px] text-[#e8e7e9]">
            <EyeIcon />
            <CameraIcon />
          </span>
        </div>
        {objects.map((name) => {
          const active = name === selected;
          return (
            <div key={name} className={clsx("flex h-5 items-center pr-[10px] pl-11", active && "bg-[#314d84]")}>
              <ChevronRight className="size-3 text-[#c3c2c5]" />
              <span className={clsx("ml-1 flex size-5 items-center justify-center rounded", active && "bg-[#7c86a4]")}>
                <ObjectMesh className={clsx("size-4", active ? "text-[#e59a67]" : "text-[#cd8748]")} />
              </span>
              <button type="button" onClick={() => setSelected(name)} className={clsx("w-[66px] pl-1 text-left", active && "text-[#f0a24b]")}>
                {name}
              </button>
              <MeshData className={clsx("size-4", active ? "text-[#1eb4d4]" : "text-[#1fae7f]")} />
              <span className="flex flex-1 justify-end gap-[6px] text-[#e8e7e9]">
                <EyeIcon />
                <CameraIcon />
              </span>
            </div>
          );
        })}
        <div className="absolute top-[45px] left-[29px] h-[130px] w-px bg-[#6a696c]" />
      </div>
    </section>
  );
};

/* ---------- properties ---------- */

const tabs: { name: string; icon: React.ReactNode; className: string }[] = [
  { name: "Tool", icon: <ToolIcon />, className: "text-[#a9a8ab]" },
  { name: "Render", icon: <RenderIcon />, className: "mt-[9px] text-[#a9a8ab]" },
  { name: "Output", icon: <OutputIcon />, className: "text-[#a9a8ab]" },
  { name: "View Layer", icon: <ViewLayerIcon />, className: "text-[#a9a8ab]" },
  { name: "Scene", icon: <SceneIcon />, className: "text-[#a9a8ab]" },
  { name: "World", icon: <WorldIcon />, className: "text-[#b34d5f]" },
  { name: "Collection", icon: <CollectionIcon />, className: "mt-2 text-[#d0cfd1]" },
  { name: "Object", icon: <ObjectIcon fill="#e89a57" />, className: "mt-2 bg-[#323133] text-[#a9a48f]" },
  { name: "Modifiers", icon: <WrenchIcon />, className: "text-[#5b86d4]" },
  { name: "Particles", icon: <ParticlesIcon />, className: "text-[#5f76b8]" },
  { name: "Physics", icon: <PhysicsIcon />, className: "text-[#5d73ab]" },
  { name: "Constraints", icon: <ConstraintIcon />, className: "text-[#5b7cc0]" },
  { name: "Data", icon: <MeshData />, className: "text-[#1fae7f]" },
  { name: "Material", icon: <MaterialIcon />, className: "text-[#b25561]" },
];

const panels = ["Relations", "Collections", "Instancing", "Motion Paths", "Shading", "Visibility", "Viewport Display", "Line Art", "Animation", "Custom Properties"];

const Grip = () => (
  <svg viewBox="0 0 12 6" className="h-[6px] w-3 fill-[#858487]" aria-hidden="true">
    {[0, 3, 6, 9].map((x) => (
      <React.Fragment key={x}>
        <rect x={x} y="1" width="1" height="1" />
        <rect x={x} y="4" width="1" height="1" />
      </React.Fragment>
    ))}
  </svg>
);

const Dot = () => <span className="ml-[10px] size-1 rounded-full bg-[#dddcde]" />;

const VectorField = ({ name, values }: { name: string; values: string[] }) => (
  <div className="flex flex-col gap-px">
    {values.map((value, i) => {
      const axis = "XYZ"[i];
      return (
        <label key={axis} className="flex h-[19px] items-center">
          <span className="flex-1 pr-[11px] text-right">{i === 0 ? `${name} X` : axis}</span>
          <input
            aria-label={`${name} ${axis}`}
            defaultValue={value}
            className={clsx("h-[19px] w-[124px] bg-[#535255] text-center text-[#e3e2e4] outline-none", i === 0 && "rounded-t", i === 2 && "rounded-b")}
          />
          <span className="pl-1 text-[#98979a]"><LockIcon /></span>
          <Dot />
        </label>
      );
    })}
  </div>
);

const Properties = () => (
  <section className={clsx(editor, "flex min-h-0 flex-1 flex-col bg-[#302f32] text-[#dddcde]")}>
    <header className="flex h-[26px] shrink-0 items-center px-2 pr-[6px] pb-[2px]">
      <MenuButton label="Editor type"><PropsIcon /></MenuButton>
      <div className="flex flex-1 justify-center pl-11">
        <SearchBox label="Search properties" />
      </div>
      <button type="button" aria-label="Options" className="ml-14 flex h-5 w-5 items-center justify-center rounded border border-[#3c3b3e] bg-[#29282b]"><ChevronDown /></button>
    </header>
    <div className="flex min-h-0 flex-1">
      <nav className="flex w-[29px] shrink-0 flex-col bg-[#1c1c1e] pt-[7px]">
        {tabs.map((t) => (
          <button key={t.name} type="button" aria-label={t.name} className={clsx("flex h-7 shrink-0 items-center justify-center", t.className)}>
            {t.icon}
          </button>
        ))}
      </nav>
      <div className="flex-1 px-[7px] pr-[6px]">
        <div className="flex h-[35px] items-center gap-2 pl-[2px]">
          <ObjectIcon />
          <span className="flex-1">Part_06</span>
          <PinIcon className="mr-[2px] size-4 text-[#98979a]" />
        </div>
        <div className="mt-[9px] flex h-5 overflow-hidden rounded border border-[#3c3b3e] bg-[#1d1c1f]">
          <button type="button" aria-label="Browse object" className="flex w-[31px] items-center justify-center gap-1 border-r border-[#3c3b3e] bg-[#29282b]">
            <ObjectIcon />
            <ChevronDown />
          </button>
          <input aria-label="Object name" defaultValue="Part_06" className="min-w-0 flex-1 bg-transparent pl-[7px] outline-none" />
        </div>
        <div className="mt-[10px] rounded bg-[#3d3c3f] pb-[2px]">
          <button type="button" className="flex h-[26px] w-full items-center pr-[9px] pl-2 text-left">
            <ChevronDown className="size-[10px]" />
            <span className="flex-1 pl-1">Transform</span>
            <Grip />
          </button>
          <div className="flex flex-col gap-[6px] pt-[7px] pr-[15px] pl-2">
            <VectorField name="Location" values={["0 m", "0 m", "0 m"]} />
            <VectorField name="Rotation" values={["90°", "0°", "0°"]} />
            <div className="flex h-[19px] items-center">
              <label htmlFor="rotation-mode" className="flex-1 pr-[11px] text-right">Mode</label>
              <div className="relative">
                <select id="rotation-mode" className="h-[19px] w-[124px] appearance-none rounded bg-[#29282b] pl-[7px] outline-none">
                  <option>XYZ Euler</option>
                  <option>Quaternion</option>
                  <option>Axis Angle</option>
                </select>
                <ChevronDown className="pointer-events-none absolute top-[6px] right-[3px] size-2" />
              </div>
              <span className="w-5" />
              <Dot />
            </div>
            <VectorField name="Scale" values={["1.000", "1.000", "1.000"]} />
          </div>
          <button type="button" className="mt-[9px] flex h-6 items-center pl-[21px]">
            <ChevronRight />
            <span className="pl-[3px]">Delta Transform</span>
          </button>
        </div>
        <div className="mt-px flex flex-col gap-[2px]">
          {panels.map((name) => (
            <button key={name} type="button" className="flex h-[25px] items-center rounded bg-[#3d3c3f] pr-[9px] pl-[7px] text-left">
              <ChevronRight />
              <span className="flex-1 pl-1">{name}</span>
              <Grip />
            </button>
          ))}
        </div>
      </div>
    </div>
  </section>
);

export default function App() {
  return (
    <div className="relative flex h-screen flex-col bg-[#18171a] font-['Inter',sans-serif] text-[11px] leading-4 tabular-nums select-none [font-feature-settings:'cv08']">
      <TitleBar />
      <TopBar />
      <main className="flex min-h-0 flex-1 gap-1 pr-px">
        <div className="flex min-w-0 flex-1 flex-col gap-[3px]">
          <ImageEditor />
          <Timeline />
        </div>
        <aside className="flex w-[331px] shrink-0 flex-col gap-[3px]">
          <Outliner />
          <Properties />
        </aside>
      </main>
      <footer className="flex h-[21px] items-center justify-end pr-3 text-[#8d8c8f]">4.5.3</footer>
      <UsageOverlay />
    </div>
  );
}
